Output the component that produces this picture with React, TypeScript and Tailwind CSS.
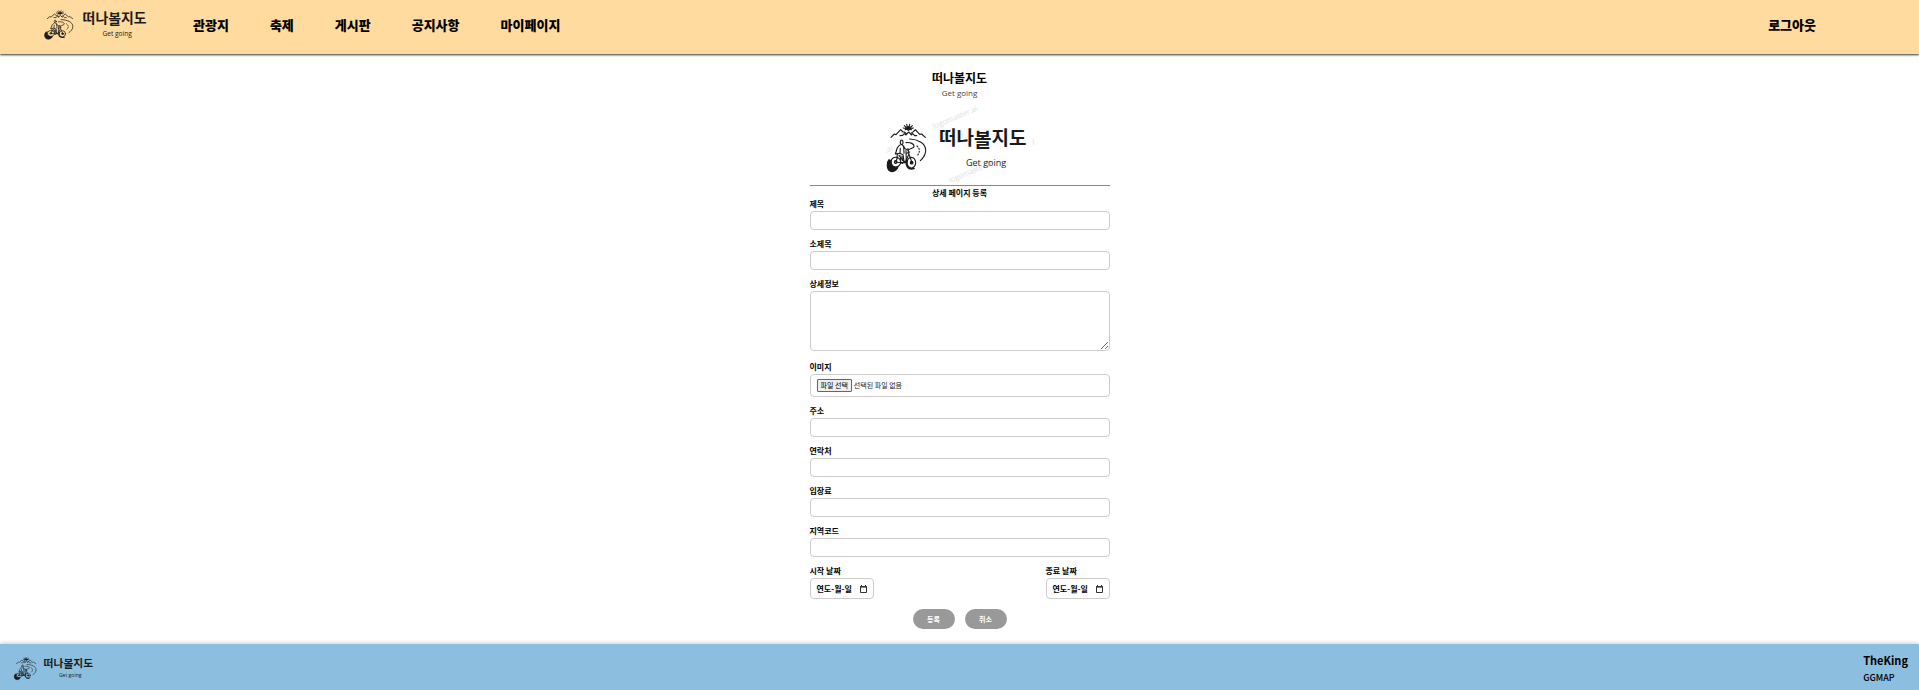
import { useState } from "react";
import type { ReactNode } from "react";

const krFont = "font-['Noto_Sans_CJK_KR','Open_Sans',sans-serif]";

type LogoProps = { width: number; height: number; className?: string; watermark?: boolean };

function Logo({ width, height, className = "", watermark = false }: LogoProps) {
  const sx = width / 150;
  const sy = height / 75;
  return (
    <svg width={width} height={height} viewBox={`0 0 ${width} ${height}`} className={`block overflow-visible ${className}`} role="img" aria-label="떠나볼지도 Get going">
      {watermark && (
        <g fill="#dedede" fontSize="7.5" fontFamily="Open Sans, sans-serif">
          <text transform="translate(49 21) rotate(-23)">logomaster.ai</text>
          <text transform="translate(65 75) rotate(-23)">logomaster.ai</text>
          <text transform="translate(1 45) rotate(-23)">.ai</text>
          <text transform="translate(148 37) rotate(-10)">l</text>
        </g>
      )}
      <svg width={width} height={height} viewBox="0 0 150 75" preserveAspectRatio="none">
        <g transform="translate(-5 2) scale(0.3333)" fill="none" stroke="#1a1a1a" strokeWidth="3.4" strokeLinecap="round" strokeLinejoin="round">
          <path d="M76 59 Q76 50 85 50 Q94 50 94 59 L90 57 L85 61 L80 57Z" fill="#1a1a1a" />
          <path d="M70 54l3 1M73 47l4 4M80 43l1 4M89 43l-1 4M97 47l-4 4M100 54l-3 1" />
          <path d="M33 82 L43 72 L48 74 L62 59 L69 66 L73 66 L80 72" />
          <path d="M60 77 L68 76 L73 71 L78 75 L86 66 L94 75 L98 71 L104 77 L110 77" />
          <path d="M92 71 L100 65 L106 59 L119 73 L125 72 L136 82" />
          <path d="M89 87 C112 88 137 98 137 121 C137 136 129 145 121 152" />
          <path d="M78 98 C91 96 103 102 102 109 C101 115 92 115 87 119" />
          <path d="M111 108 Q119 115 118 124 Q117 132 110 139" strokeDasharray="3 6" />
          <ellipse cx="65" cy="97" rx="4" ry="7" />
          <path d="M60 105 Q51 110 48 127 L46 132 L59 130 L69 134 L72 155 L67 160" />
          <path d="M68 106 L75 116 L84 120 M61 115 L60 129 M52 132 L51 143" />
          <path d="M84 116 L86 130 L96 157 M80 130 L89 126 M57 137 L75 158 L86 134 M60 137 L62 158 L78 158" />
          <path d="M71 108 L72 130 M78 122 L79 152 M66 138 L67 152" />
          <path d="M27 149 C19 157 20 179 31 184 C42 187 52 180 54 170 C43 175 30 168 31 151Z" fill="#1a1a1a" />
          <path d="M35 148 C41 139 56 140 61 150 C65 161 57 171 47 171 C36 171 31 160 35 148Z" />
          <circle cx="47" cy="156" r="4" />
          <path d="M47 156 L66 159 M47 156 L53 142" />
          <ellipse cx="94" cy="158" rx="13" ry="16" />
          <path d="M81 151 C76 165 83 177 94 177 L102 175" strokeWidth="5" />
          <circle cx="95" cy="158" r="4" fill="#1a1a1a" />
        </g>
      </svg>
      <g fill="#1a1a1a">
        <text x={54 * sx} y={37 * sy} fontSize={19 * sx} fontWeight="700" fontFamily="Noto Sans CJK KR, sans-serif">
          떠나<tspan dy={2 * sy}>볼</tspan><tspan dy={-2 * sy}>지도</tspan>
        </text>
        <text x={81 * sx} y={58 * sy} fontSize={9 * sx} fontFamily="Open Sans, sans-serif">Get going</text>
      </g>
    </svg>
  );
}

const boxClass = "block w-full rounded-sm border border-[#ccc] bg-white px-1.5 text-[8px] outline-none focus:border-gray-500";

function Field({ id, label, children }: { id: string; label: string; children?: ReactNode }) {
  return (
    <div>
      <label htmlFor={id} className="block pb-0.5 text-[8px] leading-[10px] font-bold">{label}</label>
      {children ?? <input id={id} name={id} type="text" className={`${boxClass} h-[19px]`} />}
    </div>
  );
}

function DateField({ id, label }: { id: string; label: string }) {
  const [value, setValue] = useState("");
  return (
    <Field id={id} label={label}>
      <div className="relative w-16">
        <input
          id={id}
          name={id}
          type="date"
          value={value}
          onChange={(e) => setValue(e.target.value)}
          className={`${boxClass} h-[21px] [&::-webkit-calendar-picker-indicator]:opacity-0 ${value ? "" : "text-transparent"}`}
        />
        <span className="pointer-events-none absolute inset-0 flex items-center justify-between px-[7px]">
          <span className="text-[8px] leading-none font-bold">{value ? "" : "연도-월-일"}</span>
          <svg viewBox="0 0 7 8" className="h-2 w-[7px]" fill="none" stroke="#333">
            <path d="M0.5 1.5h6v6h-6z" />
            <path d="M0 2h7" strokeWidth="1.2" />
            <path d="M1.5 0v1M5.5 0v1" />
          </svg>
        </span>
      </div>
    </Field>
  );
}

const navItems = ["관광지", "축제", "게시판", "공지사항", "마이페이지"];

export default function App() {
  const [fileName, setFileName] = useState("선택된 파일 없음");
  return (
    <div className={`flex min-h-screen flex-col bg-white text-black ${krFont}`}>
      <header className="flex h-[54px] items-center bg-[#ffdb9f] pr-[103px] pl-[43px] shadow-[0_1px_2px_#333]">
        <a href="#home" className="self-start pt-px"><Logo width={110} height={45} /></a>
        <nav className="ml-10 flex flex-1 items-center gap-[41px] pb-1 text-[13px] leading-5 font-black">
          {navItems.map((item) => (
            <a key={item} href={`#${item}`}>{item}</a>
          ))}
          <a href="#logout" className="ml-auto">로그아웃</a>
        </nav>
      </header>

      <main className="mx-auto w-[300px] flex-1 pt-4 pb-[15px]">
        <h1 className="text-center text-xs leading-4 font-bold">떠나볼지도</h1>
        <p className="text-center font-['Open_Sans',sans-serif] text-[8px] leading-[14px] text-[#444]">Get going</p>
        <Logo watermark width={150} height={75} className="mx-auto mt-2" />
        <hr className="mt-0.5 border-t border-[#888]" />
        <h2 className="pt-px text-center text-[8px] leading-3 font-bold">상세 페이지 등록</h2>

        <form className="flex flex-col gap-[9px]" onSubmit={(e) => e.preventDefault()}>
          <Field id="title" label="제목" />
          <Field id="subtitle" label="소제목" />
          <Field id="detail" label="상세정보">
            <textarea id="detail" name="detail" className={`${boxClass} mb-0.5 h-[60px] resize`} />
          </Field>
          <Field id="image" label="이미지">
            <div className={`${boxClass} flex h-[23px] items-center`}>
              <input
                id="image"
                type="file"
                className="peer sr-only"
                onChange={(e) => setFileName(e.target.files?.[0]?.name ?? "선택된 파일 없음")}
              />
              <label htmlFor="image" className="flex h-[13px] items-center rounded-[1px] border border-[#666] bg-[#efefef] px-[3px] text-[7px] leading-none">
                파일 선택
              </label>
              <span className="ml-0.5 text-[7px] leading-none text-[#222]">{fileName}</span>
            </div>
          </Field>
          <Field id="address" label="주소" />
          <Field id="phone" label="연락처" />
          <Field id="fee" label="입장료" />
          <Field id="region" label="지역코드" />
          <div className="flex justify-between">
            <DateField id="start" label="시작 날짜" />
            <DateField id="end" label="종료 날짜" />
          </div>
          <div className="mt-px flex justify-center gap-2.5">
            <button type="submit" className="h-5 w-[42px] rounded-full bg-[#999] text-[7px] leading-none font-bold text-white">등록</button>
            <button type="button" className="h-5 w-[42px] rounded-full bg-[#999] text-[7px] leading-none font-bold text-white">취소</button>
          </div>
        </form>
      </main>

      <footer className="flex h-[46px] items-center justify-between bg-[#8cbfdf] pr-[11px] pl-[13px] shadow-[0_-1px_4px_rgba(0,0,0,0.2)]">
        <Logo width={85} height={35} />
        <div className="pt-1 font-medium">
          <p className="text-[11px] leading-[17px] font-bold">TheKing</p>
          <p className="text-[9px] leading-[17px]">GGMAP</p>
        </div>
      </footer>
    </div>
  );
}
